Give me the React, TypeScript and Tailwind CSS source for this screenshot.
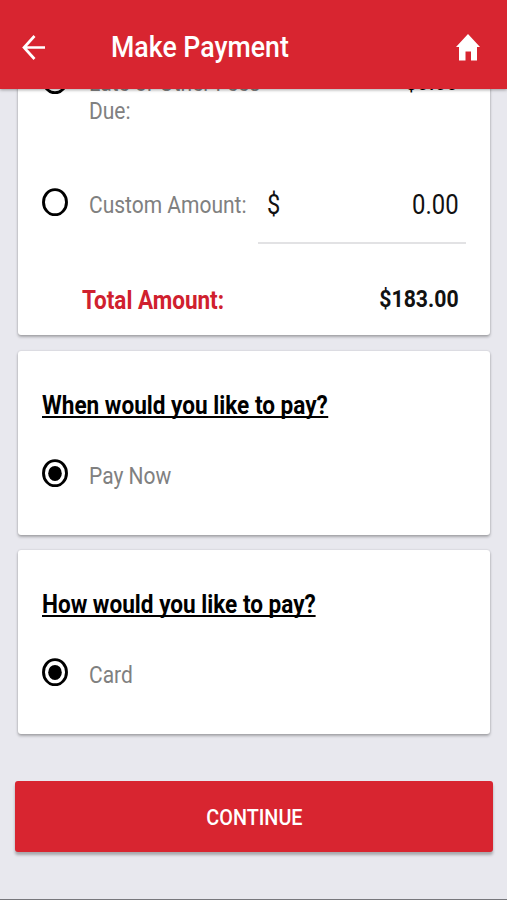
import type { ReactNode } from "react";
import clsx from "clsx";

function Radio({ checked = false }: { checked?: boolean }) {
  return (
    <svg viewBox="0 0 26 28" className="h-7 w-[26px] shrink-0" aria-hidden="true">
      <ellipse cx="13" cy="14.2" rx="11.5" ry="12.6" fill="none" stroke="#000" strokeWidth="2.9" />
      {checked && <ellipse cx="13" cy="14.4" rx="6.8" ry="7.5" fill="#000" />}
    </svg>
  );
}

function Card({ children, className }: { children: ReactNode; className?: string }) {
  return (
    <section
      className={clsx(
        "rounded-[3px] bg-white pl-6 shadow-[0_2px_3px_rgba(0,0,0,0.28),0_0_2px_rgba(0,0,0,0.16)]",
        className
      )}
    >
      {children}
    </section>
  );
}

function Label({ children }: { children: ReactNode }) {
  return (
    <p className="mt-[3px] ml-[21px] origin-left scale-x-[0.875] whitespace-nowrap text-2xl leading-7 text-[#808080]">
      {children}
    </p>
  );
}

function Question({ title, option }: { title: string; option: string }) {
  return (
    <Card className="h-[184px] pt-10">
      <h2 className="h-[27px] w-fit origin-left scale-x-[0.903] whitespace-nowrap border-b-2 border-black text-[25px] leading-[30px] font-bold text-black">
        {title}
      </h2>
      <div className="mt-[41px] flex items-start">
        <Radio checked />
        <Label>{option}</Label>
      </div>
    </Card>
  );
}

export default function App() {
  return (
    <div className="flex h-[900px] w-[507px] flex-col overflow-hidden border-b border-[#77777c] bg-[#e8e8ee] font-[Roboto,sans-serif]">
      <header className="z-10 flex h-[89px] shrink-0 items-center bg-[#d82530] pt-[5px] pr-[27px] pl-[22px] text-white shadow-[0_1px_3px_rgba(0,0,0,0.35)]">
        <svg viewBox="0 0 23 25" className="h-[25px] w-[23px]" fill="none" stroke="currentColor" strokeWidth="2.7">
          <path d="M23 12.5H2M12.5 1L2 12.5L12.5 24" />
        </svg>
        <h1 className="ml-[66px] origin-left scale-x-[0.89] whitespace-nowrap text-[30px] leading-8 font-medium">
          Make Payment
        </h1>
        <svg viewBox="0 0 24 27" className="ml-auto h-[27px] w-6" fill="currentColor">
          <path d="M12 0L24 13H21V26.5H15V17.5H9.5V26.5H3V13H0Z" />
        </svg>
      </header>

      <main className="flex min-h-0 flex-1 flex-col overflow-hidden px-[15px]">
        <div className="-mt-[35px] flex flex-col gap-[15px] pr-0.5 pl-[3px]">
          <Card className="mb-px h-[281px] pt-3">
            <div className="flex h-[59px] items-start">
              <Radio checked />
              <Label>
                Late or Other Fees
                <br />
                Due:
              </Label>
              <p className="mt-0.5 mr-8 ml-auto origin-right scale-x-[0.85] text-2xl leading-7 font-bold">$0.00</p>
            </div>
            <div className="mt-[63px] flex items-start">
              <Radio />
              <div className="w-[190px]">
                <Label>Custom Amount:</Label>
              </div>
              <div className="flex h-14 w-52 justify-between border-b-2 border-[#e2e2e4] pt-px pr-[7px] pl-[9px] text-[27px] leading-8 text-[#111]">
                <span className="origin-left scale-x-[0.875]">$</span>
                <span className="origin-right scale-x-[0.885]">0.00</span>
              </div>
            </div>
            <div className="mt-[42px] flex items-start justify-between pr-[31px] pl-10 leading-7 font-bold">
              <span className="mt-px origin-left scale-x-[0.9] text-[25px] text-[#d0202e]">Total Amount:</span>
              <span className="-mt-px origin-right scale-x-[0.885] text-2xl leading-7 text-[#111]">$183.00</span>
            </div>
          </Card>
          <Question title="When would you like to pay?" option="Pay Now" />
          <Question title="How would you like to pay?" option="Card" />
        </div>

        <button className="mt-[47px] h-[71px] w-[478px] shrink-0 rounded-[3px] bg-[#d82530] text-white shadow-[0_3px_3px_rgba(0,0,0,0.28)]">
          <span className="mt-0.5 inline-block scale-x-[0.9] text-[22px] leading-7 font-medium">CONTINUE</span>
        </button>
      </main>
    </div>
  );
}
